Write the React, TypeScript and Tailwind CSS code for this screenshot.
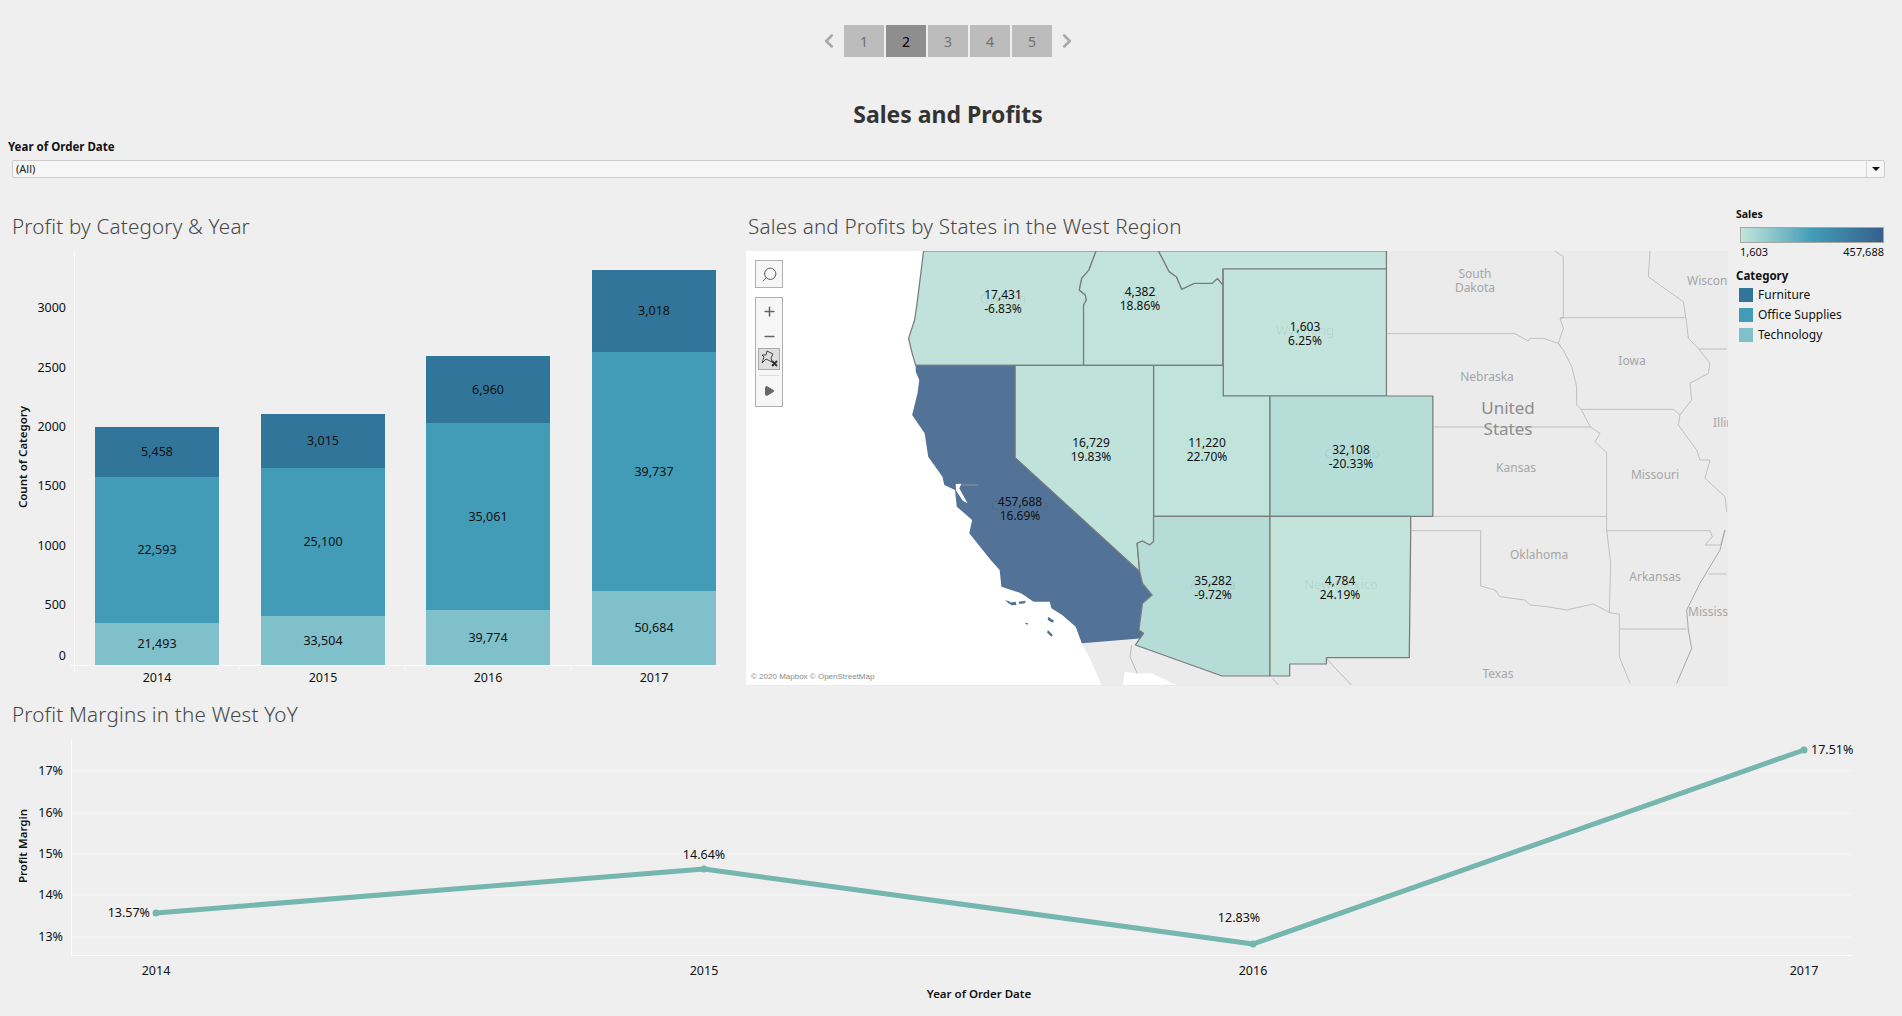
import { Minus, Play, Plus, Search, ChevronLeft, ChevronRight } from "lucide-react";

const bars = [
  { year: "2014", x: 95, tops: [427, 477, 623], labels: ["5,458", "22,593", "21,493"] },
  { year: "2015", x: 261, tops: [414, 468, 616], labels: ["3,015", "25,100", "33,504"] },
  { year: "2016", x: 426, tops: [356, 423, 610], labels: ["6,960", "35,061", "39,774"] },
  { year: "2017", x: 592, tops: [270, 352, 591], labels: ["3,018", "39,737", "50,684"] },
];
const barColors = ["#32759b", "#429cb8", "#7fc0ca"];
const barTicks = [
  ["3000", 309],
  ["2500", 369],
  ["2000", 428],
  ["1500", 487],
  ["1000", 547],
  ["500", 606],
  ["0", 657],
] as const;

const margins = [
  { year: "2014", x: 156, y: 913, label: "13.57%", lx: 150, ly: 914, anchor: "end" },
  { year: "2015", x: 704, y: 869, label: "14.64%", lx: 704, ly: 856, anchor: "middle" },
  { year: "2016", x: 1253, y: 944, label: "12.83%", lx: 1239, ly: 919, anchor: "middle" },
  { year: "2017", x: 1804, y: 750, label: "17.51%", lx: 1811, ly: 751, anchor: "start" },
];
const marginTicks = [
  ["17%", 771],
  ["16%", 813],
  ["15%", 854],
  ["14%", 895],
  ["13%", 937],
] as const;

const stateLabels = [
  ["17,431", "-6.83%", 1003, 296],
  ["4,382", "18.86%", 1140, 293],
  ["1,603", "6.25%", 1305, 328],
  ["16,729", "19.83%", 1091, 444],
  ["11,220", "22.70%", 1207, 444],
  ["32,108", "-20.33%", 1351, 451],
  ["457,688", "16.69%", 1020, 503],
  ["35,282", "-9.72%", 1213, 582],
  ["4,784", "24.19%", 1340, 582],
] as const;

const faintLabels = [
  ["Oregon", 1003, 300],
  ["Idaho", 1140, 298],
  ["Wyoming", 1305, 332],
  ["Colorado", 1352, 455],
  ["California", 1020, 507],
  ["Arizona", 1213, 586],
  ["New Mexico", 1341, 586],
] as const;

const mapLabels = [
  ["South", 1475, 275, 12],
  ["Dakota", 1475, 289, 12],
  ["Nebraska", 1487, 378, 12],
  ["Kansas", 1516, 469, 12],
  ["Iowa", 1632, 362, 12],
  ["Missouri", 1655, 476, 12],
  ["Oklahoma", 1539, 556, 12],
  ["Arkansas", 1655, 578, 12],
  ["Texas", 1498, 675, 12],
] as const;

function SectionTitle({ children }: { children: string }) {
  return <h2 className="text-[20.6px] font-light leading-none text-[#474747] tracking-[0.2px]">{children}</h2>;
}

function BarChart() {
  return (
    <svg viewBox="0 251 746 435" className="w-[746px] h-[435px] block">
      <line x1="74.5" y1="251" x2="74.5" y2="672" stroke="#fafafa" />
      <line x1="70" y1="665.5" x2="720" y2="665.5" stroke="#fafafa" />
      {[239, 405, 571].map((x) => (
        <line key={x} x1={x} y1="665" x2={x} y2="671" stroke="#fafafa" />
      ))}
      <text
        transform="translate(24 457) rotate(-90)"
        textAnchor="middle"
        dominantBaseline="middle"
        className="text-[11.5px] font-semibold"
        fill="#111"
      >
        Count of Category
      </text>
      {barTicks.map(([t, y]) => (
        <text key={t} x="66" y={y} textAnchor="end" dominantBaseline="middle" className="text-[12.5px]" fill="#111">
          {t}
        </text>
      ))}
      {bars.map((b) => {
        const edges = [...b.tops, 665];
        return (
          <g key={b.year}>
            {b.tops.map((top, i) => (
              <g key={i}>
                <rect x={b.x} y={top} width="124" height={edges[i + 1] - top} fill={barColors[i]} />
                <text
                  x={b.x + 62}
                  y={(top + edges[i + 1]) / 2 + 1}
                  textAnchor="middle"
                  dominantBaseline="middle"
                  className="text-[12.5px]"
                  fill="#111"
                >
                  {b.labels[i]}
                </text>
              </g>
            ))}
            <text x={b.x + 62} y="679" textAnchor="middle" dominantBaseline="middle" className="text-[12.5px]" fill="#111">
              {b.year}
            </text>
          </g>
        );
      })}
    </svg>
  );
}

function MapPanel() {
  const stroke = "#7b7b7b";
  return (
    <div className="relative w-[982px] h-[435px] overflow-hidden">
      <svg viewBox="746 251 982 435" className="w-[982px] h-[435px] block">
        <rect x="746" y="251" width="982" height="435" fill="#ebebeb" />
        {/* west coast states, traced from the map crop */}
        <g transform="translate(880 240) scale(0.35714 0.33333)" strokeLinejoin="round">
          <path d="M-375 33H565V1210L590 1260L620 1335H-375Z" fill="#fff" />
          <path d="M680 1335L685 1295L720 1300L760 1300L800 1320L830 1335Z" fill="#fff" />
          <path d="M705 1215L700 1250L720 1300M1100 1315L1115 1335M1250 1255L1275 1285L1320 1335" fill="none" stroke="#a5a5a5" strokeWidth="2" />
          <path
            d="M122 33L105 180L97 240L80 295L90 340L100 376H570V195L578 180L575 165L558 150L565 115L585 90L605 33Z"
            fill="#c0e2da"
            stroke={stroke}
            strokeWidth="3.5"
          />
          <path
            d="M605 33L585 90L565 115L558 150L575 165L578 180L570 195V376H960V135L945 115L930 130L880 130L845 148L830 110L810 95L780 33Z"
            fill="#c1e3db"
            stroke={stroke}
            strokeWidth="3.5"
          />
          <path
            d="M780 33L810 95L830 110L845 148L880 130L930 130L945 115L960 135V87H1418V33Z"
            fill="#c2e4dc"
            stroke={stroke}
            strokeWidth="3.5"
          />
          <rect x="961" y="87" width="457" height="381" fill="#c3e4dc" stroke={stroke} strokeWidth="3.5" />
          <path d="M766 376H961V468H1092V829H766Z" fill="#c0e4da" stroke={stroke} strokeWidth="3.5" />
          <rect x="1092" y="468" width="456" height="361" fill="#b6ded9" stroke={stroke} strokeWidth="3.5" />
          <path
            d="M378 376H766V905L755 915L735 903L720 910L727 995L378 653Z"
            fill="#bfe2da"
            stroke={stroke}
            strokeWidth="3.5"
          />
          <path
            d="M100 376H378V653L727 995L735 1030L762 1065L735 1090L725 1170L738 1180L735 1195L565 1210L548 1160L510 1125L480 1105L475 1085L430 1085L395 1060L340 1040L335 990L310 960L250 880L258 840L215 800L210 750L180 735L175 710L135 650L125 580L90 525L105 460L110 420L100 395Z"
            fill="#527397"
          />
          <path d="M212 732L228 731L222 745L245 790L232 782L213 752Z" fill="#fff" />
          <path d="M228 735H275" stroke="#9a9a9a" strokeWidth="2.5" fill="none" />
          <path d="M350 1080L365 1085L362 1092Z M360 1088L380 1085L382 1095L368 1096Z M388 1085L408 1082L406 1090L390 1092Z M470 1130L488 1142L482 1148L470 1140Z M405 1148L415 1150L412 1155Z M470 1170L484 1185L480 1190L468 1178Z" fill="#527397" />
          <path
            d="M766 829H1092V1308H958L715 1215L738 1180L725 1170L735 1090L762 1065L735 1030L727 995L720 910L735 903L755 915L766 905Z"
            fill="#b6dcd8"
            stroke={stroke}
            strokeWidth="3.5"
          />
          <path d="M1092 829H1486V875L1482 1253H1250V1272H1147V1308H1092Z" fill="#c2e4db" stroke={stroke} strokeWidth="3.5" />
          <path d="M378 376V653L727 995M100 376H378" fill="none" stroke={stroke} strokeWidth="3" />
        </g>
        {/* state lines to the east */}
        <g transform="translate(1380 240) scale(0.33333)" fill="none" stroke="#b0b0b0" strokeWidth="2.2">
          <path d="M20 281H405L445 303L450 295H490L535 310L545 325" />
          <path d="M525 33L550 50V233L540 235L550 265L535 310L550 330L575 380L590 440L590 495L605 510L630 560L660 580L645 605L680 638V870L692 970L688 1118L718 1122V1250L750 1330" />
          <path d="M540 233H915" />
          <path d="M810 33L805 110L860 150L910 185L920 250L925 295L955 325L990 370L985 400L930 430L935 480L900 525L895 555L950 630L960 660L990 660L975 715L1035 770L1040 815" />
          <path d="M605 508H880L900 525" />
          <path d="M160 561H630" />
          <path d="M160 829H680" />
          <path d="M92 872H302V1038L345 1050L360 1070L435 1080L450 1095L500 1100L560 1110L640 1092L690 1118" />
          <path d="M680 872H990L997 890L975 915H1022L1035 870" />
          <path d="M1035 870L1020 930L960 1030L920 1110L925 1170L935 1225L890 1330" stroke="#8f8f8f" />
          <path d="M718 1167H920" />
          <path d="M955 327H1040M985 1002H1040" />
        </g>
        {faintLabels.map(([t, x, y]) => (
          <text key={t} x={x} y={y} textAnchor="middle" dominantBaseline="middle" className="text-[13px]" fill="#000" fillOpacity="0.08">
            {t}
          </text>
        ))}
        {stateLabels.map(([a, b, x, y]) => (
          <g key={a} className="text-[12px]" fill="#111" textAnchor="middle">
            <text x={x} y={y} dominantBaseline="middle">
              {a}
            </text>
            <text x={x} y={y + 14} dominantBaseline="middle">
              {b}
            </text>
          </g>
        ))}
        {mapLabels.map(([t, x, y, size]) => (
          <text key={t} x={x} y={y} textAnchor="middle" dominantBaseline="middle" fontSize={size} fill="#a6a6a6">
            {t}
          </text>
        ))}
        <text x="1508" y="409" textAnchor="middle" dominantBaseline="middle" fontSize="17" fill="#8c8c8c">
          United
        </text>
        <text x="1508" y="430" textAnchor="middle" dominantBaseline="middle" fontSize="17" fill="#8c8c8c">
          States
        </text>
        <text x="1687" y="282" dominantBaseline="middle" fontSize="12" fill="#a6a6a6">
          Wisconsin
        </text>
        <text x="1713" y="424" dominantBaseline="middle" fontSize="12" fill="#a6a6a6">
          Illinois
        </text>
        <text x="1688" y="613" dominantBaseline="middle" fontSize="12" fill="#a6a6a6">
          Mississippi
        </text>
        <text x="751" y="677" dominantBaseline="middle" fontSize="8" fill="#8a8a8a" className="font-['Liberation_Sans',sans-serif]">
          © 2020 Mapbox © OpenStreetMap
        </text>
      </svg>

      <div className="absolute left-[9px] top-[9px] flex flex-col gap-[9px] w-[28px]">
        <div className="h-[28px] border border-[#b0b0b0] bg-[#f6f6f6] flex items-center justify-center">
          <Search size={17} strokeWidth={1.3} className="text-[#555] -scale-x-100" />
        </div>
        <div className="h-[110px] border border-[#b0b0b0] bg-[#f6f6f6] flex flex-col items-center">
          <div className="h-[26px] flex items-center justify-center">
            <Plus size={15} strokeWidth={2.4} className="text-[#666]" />
          </div>
          <div className="h-[24px] flex items-center justify-center">
            <Minus size={15} strokeWidth={2.4} className="text-[#666]" />
          </div>
          <div className="w-[22px] h-[22px] border border-[#aaa] bg-[#dedede] flex items-center justify-center">
            <svg viewBox="0 0 20 20" className="w-[20px] h-[20px]">
              <path d="M8 2L14 5L12 9L13 13L7 10L3 14L5 8L3 6L7 6Z" fill="none" stroke="#333" strokeWidth="0.9" />
              <path d="M13 12L18 17M18 12L13 17" stroke="#333" strokeWidth="2" />
            </svg>
          </div>
          <div className="w-[20px] h-px bg-[#ddd] mt-[5px]" />
          <div className="flex-1 flex items-center justify-center">
            <Play size={12} className="text-[#666] fill-[#666]" />
          </div>
        </div>
      </div>
    </div>
  );
}

function Legend() {
  return (
    <div className="w-[174px] pl-[8px] text-[12px] text-[#111]">
      <div className="h-[18px] flex items-center font-bold text-[10.5px]">Sales</div>
      <div className="ml-[4px] mt-[3px] w-[144px] h-[16px] border border-[#a8a8a0] bg-gradient-to-r from-[#c1e6da] via-[#439cb8] to-[#35608c]" />
      <div className="ml-[4px] w-[144px] flex justify-between h-[18px] items-center text-[11px]">
        <span>1,603</span>
        <span>457,688</span>
      </div>
      <div className="h-[16px] mt-[7px] flex items-center font-bold text-[11.5px]">Category</div>
      <div className="flex flex-col gap-[6px] mt-[4px] ml-[3px]">
        {[
          ["Furniture", "bg-[#32759b]"],
          ["Office Supplies", "bg-[#429cb8]"],
          ["Technology", "bg-[#7fc0ca]"],
        ].map(([name, color]) => (
          <div key={name} className="flex items-center gap-[5px] h-[14px]">
            <div className={`w-[14px] h-[14px] ${color}`} />
            <span>{name}</span>
          </div>
        ))}
      </div>
    </div>
  );
}

function LineChart() {
  const points = margins.map((m) => `${m.x},${m.y}`).join(" ");
  return (
    <svg viewBox="0 732 1902 284" className="w-[1902px] h-[284px] block">
      {marginTicks.map(([t, y]) => (
        <g key={t}>
          <line x1="71" y1={y} x2="1852" y2={y} stroke="#f5f5f5" />
          <text x="63" y={y + 1} textAnchor="end" dominantBaseline="middle" className="text-[12.5px]" fill="#111">
            {t}
          </text>
        </g>
      ))}
      <line x1="71.5" y1="738" x2="71.5" y2="955" stroke="#fafafa" />
      <line x1="71" y1="955.5" x2="1852" y2="955.5" stroke="#fafafa" />
      <text
        transform="translate(24 846) rotate(-90)"
        textAnchor="middle"
        dominantBaseline="middle"
        className="text-[11.5px] font-semibold"
        fill="#111"
      >
        Profit Margin
      </text>
      <polyline points={points} fill="none" stroke="#75b6ae" strokeWidth="5" strokeLinejoin="round" />
      {margins.map((m) => (
        <g key={m.year}>
          <circle cx={m.x} cy={m.y} r="3.5" fill="#75b6ae" />
          <text
            x={m.lx}
            y={m.ly}
            textAnchor={m.anchor as "end" | "middle" | "start"}
            dominantBaseline="middle"
            className="text-[12.5px]"
            fill="#111"
          >
            {m.label}
          </text>
          <text x={m.x} y="972" textAnchor="middle" dominantBaseline="middle" className="text-[12.5px]" fill="#111">
            {m.year}
          </text>
        </g>
      ))}
      <text x="979" y="995" textAnchor="middle" dominantBaseline="middle" className="text-[11.5px] font-semibold" fill="#111">
        Year of Order Date
      </text>
    </svg>
  );
}

function App() {
  return (
    <div className="h-screen w-screen overflow-hidden bg-[#efefef] font-['Noto_Sans',sans-serif]">
      <div className="pt-[25px] pr-[6px] flex justify-center items-center">
        <ChevronLeft size={22} strokeWidth={3} className="text-[#aaa] mr-[4px]" />
        <div className="flex gap-[2px]">
          {["1", "2", "3", "4", "5"].map((n) => (
            <div
              key={n}
              className={
                n === "2"
                  ? "w-[40px] h-[32px] bg-[#8e8e8e] text-black text-[14px] flex items-center justify-center"
                  : "w-[40px] h-[32px] bg-[#bcbcbc] text-[#707070] text-[14px] flex items-center justify-center"
              }
            >
              {n}
            </div>
          ))}
        </div>
        <ChevronRight size={22} strokeWidth={3} className="text-[#aaa] ml-[4px]" />
      </div>

      <h1 className="mt-[37px] pr-[6px] h-[40px] flex items-center justify-center text-[23px] font-bold text-[#333]">
        Sales and Profits
      </h1>

      <div className="mt-[5px] h-[16px] pl-[8px] flex items-center text-[11.5px] font-bold text-[#111]">
        Year of Order Date
      </div>
      <div className="mt-[5px] ml-[12px] w-[1873px] h-[18px] border border-[#cdcdcd] rounded-[2px] bg-[#f6f6f6] flex items-center">
        <span className="flex-1 pl-[3px] text-[11px] text-[#222]">(All)</span>
        <div className="w-[18px] h-full border-l border-[#d8d8d8] flex items-center justify-center">
          <div className="w-0 h-0 border-l-[4px] border-r-[4px] border-t-[4px] border-l-transparent border-r-transparent border-t-[#111]" />
        </div>
      </div>

      <div className="mt-[28px] flex">
        <div className="w-[746px]">
          <div className="h-[40px] pl-[12px] flex items-center">
            <SectionTitle>Profit by Category &amp; Year</SectionTitle>
          </div>
          <div className="mt-[5px]">
            <BarChart />
          </div>
        </div>
        <div className="w-[982px]">
          <div className="h-[40px] pl-[2px] flex items-center">
            <SectionTitle>Sales and Profits by States in the West Region</SectionTitle>
          </div>
          <div className="mt-[5px]">
            <MapPanel />
          </div>
        </div>
        <Legend />
      </div>

      <div className="mt-[10px] h-[36px] pl-[12px] flex items-center">
        <SectionTitle>Profit Margins in the West YoY</SectionTitle>
      </div>
      <LineChart />
    </div>
  );
}

export default App;
